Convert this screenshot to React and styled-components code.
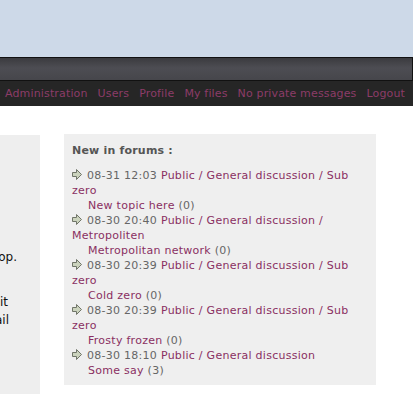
import styled, { createGlobalStyle } from "styled-components";

const Global = createGlobalStyle`
    body {
        margin: 0;
        background: #fff;
        font-family: "DejaVu Sans", Verdana, sans-serif;
        font-size: 11px;
    }
`;

const Header = styled.div`
    height: 57px;
    background: #cdd9e8;
`;

const Bar = styled.div`
    height: 22px;
    border: 1px solid #111;
    border-left: 0 none;
    background: linear-gradient(#3b3b3f, #4d4d53 45%, #46464b);
`;

const Nav = styled.nav`
    display: flex;
    gap: 10px;
    height: 25px;
    align-items: center;
    padding-left: 5px;
    background: #262626;
    letter-spacing: 0.15px;
`;

const NavLink = styled.a`
    color: #8c3c68;
    text-decoration: none;
    white-space: nowrap;
`;

const Main = styled.div`
    display: flex;
    align-items: flex-start;
    gap: 24px;
    padding-top: 28px;
`;

const LeftPanel = styled.div`
    width: 40px;
    height: 259px;
    margin-top: 1px;
    padding-top: 113px;
    box-sizing: border-box;
    overflow: hidden;
    background: #eeeeee;
    color: #111;
    font-size: 12px;
    line-height: 18px;
`;

const Para = styled.div`
    margin-bottom: ${(p) => p.$gap || 0}px;
`;

const Tail = styled.div`
    display: flex;
    justify-content: flex-end;
    white-space: nowrap;
    padding-right: ${(p) => p.$right}px;
`;

const Box = styled.div`
    width: 312px;
    box-sizing: border-box;
    padding: 9px 8px 7px 8px;
    background: #efefef;
    line-height: 15px;
    letter-spacing: 0.27px;
`;

const Title = styled.div`
    font-weight: bold;
    color: #555;
    margin-bottom: 10px;
    letter-spacing: 0.2px;
`;

const Entry = styled.div`
    color: #666;
`;

const Link = styled.a`
    color: #8a2f62;
    text-decoration: none;
`;

const Topic = styled.div`
    padding-left: 16px;
    color: #666;
`;

const ArrowIcon = styled.svg`
    width: 10px;
    height: 11px;
    margin-right: 5px;
    vertical-align: -1px;
`;

function Arrow() {
    return (
        <ArrowIcon viewBox="0 0 10 11">
            <polygon
                points="0.5,3.5 4.5,3.5 4.5,0.5 9.5,5.5 4.5,10.5 4.5,7.5 0.5,7.5"
                fill="#cbd3bd"
                stroke="#707568"
                strokeWidth="1"
            />
        </ArrowIcon>
    );
}

const posts = [
    { date: "08-31 12:03", path: "Public / General discussion / Sub zero", topic: "New topic here", count: 0 },
    { date: "08-30 20:40", path: "Public / General discussion / Metropoliten", topic: "Metropolitan network", count: 0 },
    { date: "08-30 20:39", path: "Public / General discussion / Sub zero", topic: "Cold zero", count: 0 },
    { date: "08-30 20:39", path: "Public / General discussion / Sub zero", topic: "Frosty frozen", count: 0 },
    { date: "08-30 18:10", path: "Public / General discussion", topic: "Some say", count: 3 },
];

const menu = ["Administration", "Users", "Profile", "My files", "No private messages", "Logout"];

export default function App() {
    return (
        <>
            <Global />
            <Header />
            <Bar />
            <Nav>
                {menu.map((m) => (
                    <NavLink key={m} href="#">{m}</NavLink>
                ))}
            </Nav>
            <Main>
                <LeftPanel>
                    <Para $gap={27}>
                        <Tail $right={23}>to the shop.</Tail>
                    </Para>
                    <Para>
                        <Tail $right={32}>as you want it</Tail>
                        <Tail $right={31}>sent by e-mail</Tail>
                    </Para>
                </LeftPanel>
                <Box>
                    <Title>New in forums :</Title>
                    {posts.map((p, i) => (
                        <div key={i}>
                            <Entry>
                                <Arrow />
                                {p.date} <Link href="#">{p.path}</Link>
                            </Entry>
                            <Topic>
                                <Link href="#">{p.topic}</Link> ({p.count})
                            </Topic>
                        </div>
                    ))}
                </Box>
            </Main>
        </>
    );
}
